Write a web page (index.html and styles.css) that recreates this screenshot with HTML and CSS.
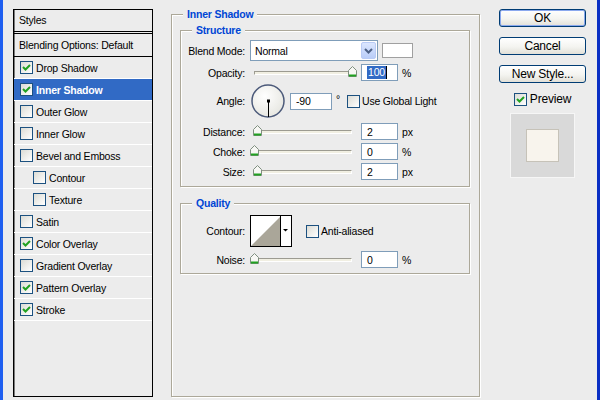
FILE: index.html
```html
<!DOCTYPE html>
<html>
<head>
    <title>Layer Style</title>
    <link rel="stylesheet" href="styles.css">
</head>
<body>
    <!-- list of layer effects -->
    <div class="styles-panel">
        <div class="styles-head">Styles</div>
        <ul class="style-list">
            <li class="blend-opt">Blending Options: Default</li>
            <li><span class="cb"><svg width="11" height="11"><path d="M2 5 L4.5 7.5 L9 3"/></svg></span>Drop Shadow</li>
            <li class="active"><span class="cb"><svg width="11" height="11"><path d="M2 5 L4.5 7.5 L9 3"/></svg></span>Inner Shadow</li>
            <li><span class="cb"></span>Outer Glow</li>
            <li><span class="cb"></span>Inner Glow</li>
            <li><span class="cb"></span>Bevel and Emboss</li>
            <li class="sub"><span class="cb"></span>Contour</li>
            <li class="sub"><span class="cb"></span>Texture</li>
            <li><span class="cb"></span>Satin</li>
            <li><span class="cb"><svg width="11" height="11"><path d="M2 5 L4.5 7.5 L9 3"/></svg></span>Color Overlay</li>
            <li><span class="cb"></span>Gradient Overlay</li>
            <li><span class="cb"><svg width="11" height="11"><path d="M2 5 L4.5 7.5 L9 3"/></svg></span>Pattern Overlay</li>
            <li><span class="cb"><svg width="11" height="11"><path d="M2 5 L4.5 7.5 L9 3"/></svg></span>Stroke</li>
        </ul>
    </div>

    <!-- settings for the selected effect -->
    <fieldset class="effect">
        <legend>Inner Shadow</legend>

        <fieldset class="structure">
            <legend>Structure</legend>
            <div class="rows">
                <div class="row blend">
                    <span class="lbl">Blend Mode:</span>
                    <div class="select">
                        <span>Normal</span>
                        <span class="drop"><svg width="9" height="6"><path d="M1 1 L4.5 4.5 L8 1"/></svg></span>
                    </div>
                    <span class="swatch"></span>
                </div>
                <div class="row">
                    <span class="lbl">Opacity:</span>
                    <div class="slider">
                        <span class="track"></span>
                        <svg class="thumb" style="left: 98px" width="10" height="12"><path class="knob" d="M0.5 4.5 L4.5 0.5 L8.5 4.5 V10.5 H0.5 Z"/><rect class="foot" x="1" y="8.5" width="7" height="2"/></svg>
                    </div>
                    <div class="num"><span class="picked">100</span><span class="caret"></span></div>
                    <span class="unit">%</span>
                </div>
                <div class="row angle">
                    <span class="lbl">Angle:</span>
                    <svg class="dial" width="34" height="34">
                        <defs>
                            <radialGradient id="dialfill" cx="40%" cy="35%" r="70%">
                                <stop offset="0" stop-color="#ffffff"/>
                                <stop offset="1" stop-color="#e6e6e0"/>
                            </radialGradient>
                        </defs>
                        <circle cx="17" cy="17" r="16" fill="url(#dialfill)" stroke="#4c5a7a" stroke-width="1.5"/>
                        <line x1="17.5" y1="17" x2="17.5" y2="33" stroke="#000" stroke-width="1"/>
                        <rect x="16" y="15.5" width="3" height="3" fill="#000"/>
                    </svg>
                    <div class="num wide">-90</div>
                    <span class="deg">°</span>
                    <span class="cb"></span>
                    <span class="cb-text">Use Global Light</span>
                </div>
                <div class="row gap5">
                    <span class="lbl">Distance:</span>
                    <div class="slider">
                        <span class="track"></span>
                        <svg class="thumb" style="left: 3px" width="10" height="12"><path class="knob" d="M0.5 4.5 L4.5 0.5 L8.5 4.5 V10.5 H0.5 Z"/><rect class="foot" x="1" y="8.5" width="7" height="2"/></svg>
                    </div>
                    <div class="num">2</div>
                    <span class="unit">px</span>
                </div>
                <div class="row">
                    <span class="lbl">Choke:</span>
                    <div class="slider">
                        <span class="track"></span>
                        <svg class="thumb" style="left: 0px" width="10" height="12"><path class="knob" d="M0.5 4.5 L4.5 0.5 L8.5 4.5 V10.5 H0.5 Z"/><rect class="foot" x="1" y="8.5" width="7" height="2"/></svg>
                    </div>
                    <div class="num">0</div>
                    <span class="unit">%</span>
                </div>
                <div class="row">
                    <span class="lbl">Size:</span>
                    <div class="slider">
                        <span class="track"></span>
                        <svg class="thumb" style="left: 3px" width="10" height="12"><path class="knob" d="M0.5 4.5 L4.5 0.5 L8.5 4.5 V10.5 H0.5 Z"/><rect class="foot" x="1" y="8.5" width="7" height="2"/></svg>
                    </div>
                    <div class="num">2</div>
                    <span class="unit">px</span>
                </div>
            </div>
        </fieldset>

        <fieldset class="quality">
            <legend>Quality</legend>
            <div class="rows">
                <div class="row contour-row">
                    <span class="lbl">Contour:</span>
                    <svg class="contour" width="42" height="32">
                        <rect x="0.5" y="0.5" width="41" height="31" fill="#fff" stroke="#000"/>
                        <polygon points="1,31 30,2 30,31" fill="#aaa699"/>
                        <line x1="30.5" y1="1" x2="30.5" y2="31" stroke="#000"/>
                        <polygon points="33,14 38,14 35.5,16.5" fill="#000"/>
                    </svg>
                    <span class="cb"></span>
                    <span class="cb-text">Anti-aliased</span>
                </div>
                <div class="row gap4">
                    <span class="lbl">Noise:</span>
                    <div class="slider">
                        <span class="track"></span>
                        <svg class="thumb" style="left: 0px" width="10" height="12"><path class="knob" d="M0.5 4.5 L4.5 0.5 L8.5 4.5 V10.5 H0.5 Z"/><rect class="foot" x="1" y="8.5" width="7" height="2"/></svg>
                    </div>
                    <div class="num">0</div>
                    <span class="unit">%</span>
                </div>
            </div>
        </fieldset>
    </fieldset>

    <!-- dialog buttons and preview -->
    <div class="side">
        <div class="buttons">
            <div class="btn default">OK</div>
            <div class="btn">Cancel</div>
            <div class="btn">New Style...</div>
        </div>
        <div class="preview-toggle">
            <span class="cb"><svg width="11" height="11"><path d="M2 5 L4.5 7.5 L9 3"/></svg></span>Preview
        </div>
        <div class="preview">
            <div class="preview-swatch"></div>
        </div>
    </div>
</body>
</html>
```

FILE: styles.css
```css
/* dialog frame */
body {
    margin: 0;
    width: 600px;
    height: 400px;
    box-sizing: border-box;
    display: flex;
    align-items: flex-start;
    background: #ececec;
    border-left: 3px solid #1f5ff0;
    border-right: 3px solid #0a2fc4;
    font-family: "Liberation Sans", Arial, sans-serif;
    font-size: 10.5px;
    letter-spacing: -0.2px;
    color: #000;
    overflow: hidden;
}

/* checkbox */
.cb {
    display: block;
    flex: none;
    width: 13px;
    height: 13px;
    box-sizing: border-box;
    border: 1px solid #1c5180;
    background: linear-gradient(135deg, #dcdcd5, #ffffff);
}

.cb svg {
    display: block;
}

.cb path {
    fill: none;
    stroke: #21a121;
    stroke-width: 2;
}

/* left list */
.styles-panel {
    margin: 9px 0 0 10px;
    width: 140px;
    height: 388px;
    box-sizing: border-box;
    border: 1px solid #000;
    box-shadow: inset 1px 0 #7a7a7a;
}

.styles-head {
    height: 21px;
    line-height: 21px;
    padding-left: 5px;
    border-bottom: 1px solid #000;
}

.style-list {
    list-style: none;
    margin: 1px 0 0;
    padding: 0;
    border-top: 1px solid #000;
}

.style-list li {
    height: 21px;
    display: flex;
    align-items: center;
    padding-left: 6px;
    border-bottom: 1px solid #fff;
}

.style-list li .cb {
    margin-right: 3px;
}

.style-list .blend-opt {
    height: 22px;
    padding-left: 5px;
    border-bottom-color: #000;
}

.style-list .sub {
    padding-left: 19px;
}

.style-list .active {
    background: #316ac5;
    color: #fff;
    font-weight: bold;
}

/* group boxes */
fieldset {
    box-sizing: border-box;
    margin: 0;
    padding: 0;
    min-width: 0;
    border: 1px solid #aca899;
    box-shadow: inset 1px 1px #fff, 1px 1px #fff;
}

legend {
    margin-left: 11px;
    padding: 0 4px;
    line-height: 13px;
    font-weight: bold;
    color: #0046d5;
    background: #ececec;
}

.effect {
    margin: 8px 0 0 18px;
    width: 309px;
    height: 389px;
}

.structure {
    margin: 3px 0 0 8px;
    width: 290px;
}

.quality {
    margin: 10px 0 0 8px;
    width: 290px;
}

.rows {
    padding: 3px 0 6px;
}

.quality .rows {
    padding: 5px 0 5px;
}

.row {
    display: flex;
    align-items: center;
    height: 17px;
    margin-top: 3px;
}

.row:first-child {
    margin-top: 0;
}

.row.gap5 {
    margin-top: 5px;
}

.row.gap4 {
    margin-top: 4px;
}

.row.blend {
    height: 21px;
}

.row.angle {
    height: 34px;
}

.row.contour-row {
    height: 32px;
}

.lbl {
    width: 64px;
    margin-right: 5px;
    text-align: right;
    flex: none;
}

/* blend mode dropdown */
.select {
    width: 128px;
    height: 21px;
    box-sizing: border-box;
    border: 1px solid #7f9db9;
    background: #fff;
    display: flex;
    align-items: center;
    justify-content: space-between;
    padding: 1px 1px 1px 4px;
}

.drop {
    width: 15px;
    height: 17px;
    box-sizing: border-box;
    border: 1px solid #b9cbf5;
    border-radius: 2px;
    background: linear-gradient(#dbe6fe, #b9cdf8);
    display: flex;
    align-items: center;
    justify-content: center;
}

.drop svg {
    display: block;
}

.drop path {
    fill: none;
    stroke: #4d6185;
    stroke-width: 2;
}

.swatch {
    width: 31px;
    height: 15px;
    box-sizing: border-box;
    margin-left: 4px;
    border: 1px solid #a0a0a0;
    background: #fff;
}

/* sliders */
.slider {
    position: relative;
    width: 106px;
    height: 17px;
    display: flex;
    align-items: center;
}

.track {
    flex: 1;
    margin: 0 4px;
    height: 2px;
    border-top: 1px solid #9c9b91;
    border-left: 1px solid #9c9b91;
    border-bottom: 1px solid #fff;
    border-right: 1px solid #fff;
    background: #f1efe2;
}

.thumb {
    position: absolute;
    top: 2px;
}

.knob {
    fill: #f7f7f4;
    stroke: #7f8f80;
}

.foot {
    fill: #21a121;
}

/* number boxes */
.num {
    width: 37px;
    height: 17px;
    box-sizing: border-box;
    margin-left: 5px;
    padding-left: 5px;
    border: 1px solid #7f9db9;
    background: #fff;
    display: flex;
    align-items: center;
}

.num.wide {
    width: 42px;
}

.picked {
    background: #316ac5;
    color: #fff;
    padding: 0 1px;
    line-height: 13px;
}

.caret {
    width: 1px;
    height: 13px;
    background: #000;
}

.unit {
    margin-left: 4px;
}

.dial {
    display: block;
    margin-left: 1px;
}

.deg {
    margin-left: 4px;
    align-self: flex-start;
    margin-top: 9px;
}

.angle .cb {
    margin-left: 7px;
}

.cb-text {
    margin-left: 2px;
}

.contour {
    display: block;
}

.contour-row .cb {
    margin-left: 14px;
}

/* right column */
.side {
    margin: 9px 0 0 19px;
    width: 87px;
    display: flex;
    flex-direction: column;
    align-items: center;
    font-size: 12px;
}

.buttons {
    display: flex;
    flex-direction: column;
    gap: 10px;
}

.btn {
    width: 87px;
    height: 18px;
    box-sizing: border-box;
    border: 1px solid #003c74;
    border-radius: 3px;
    background: linear-gradient(#ffffff, #f4f4f0 55%, #e2e0d8);
    display: flex;
    align-items: center;
    justify-content: center;
}

.btn.default {
    box-shadow: inset 0 0 0 1px #8aa8ee;
}

.preview-toggle {
    margin-top: 9px;
    display: flex;
    align-items: center;
}

.preview-toggle .cb {
    margin-right: 3px;
}

.preview {
    margin-top: 7px;
    width: 65px;
    height: 65px;
    box-sizing: border-box;
    border: 1px solid #f6f6f6;
    background: #d9d9d9;
    display: flex;
    align-items: center;
    justify-content: center;
}

.preview-swatch {
    width: 33px;
    height: 33px;
    box-sizing: border-box;
    border: 1px solid #c6c2b8;
    background: #f8f4ed;
}
```
